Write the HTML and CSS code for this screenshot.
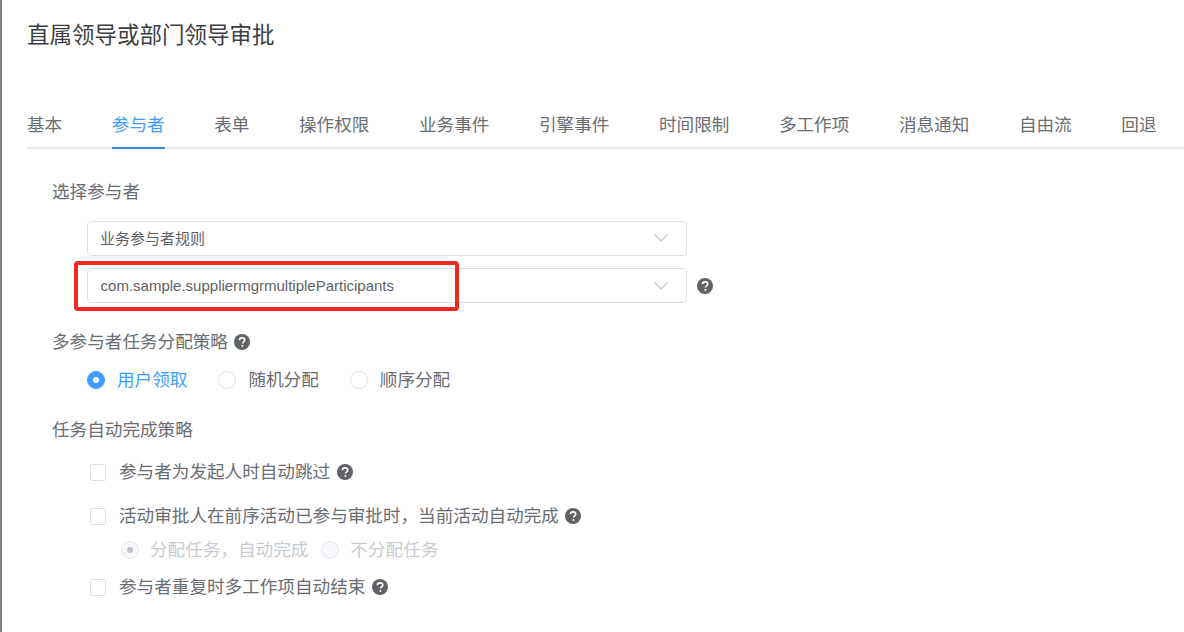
FILE: index.html
```html
<!DOCTYPE html>
<html lang="zh">
<head>
<meta charset="utf-8">
<title>直属领导或部门领导审批</title>
<link rel="stylesheet" href="styles.css">
</head>
<body>
<svg width="0" height="0" class="defs"><defs>
<symbol id="help" viewBox="0 0 16 16"><circle cx="8" cy="8" r="8" fill="#606266"/><path d="M5.4 6.3c0-1.5 1.1-2.4 2.6-2.4s2.7.9 2.7 2.2c0 1-.6 1.5-1.3 2-.6.4-.9.7-.9 1.4" fill="none" stroke="#fff" stroke-width="1.6"/><circle cx="8.4" cy="11.9" r="1" fill="#fff"/></symbol>
<symbol id="chev" viewBox="0 0 14 8"><path d="M.7.7 7 7l6.3-6.3" fill="none" stroke="#c0c4cc" stroke-width="1.2"/></symbol>
</defs></svg>
<span class="edge-mark"></span>
<main class="dialog">
  <h1 class="title">直属领导或部门领导审批</h1>
  <nav class="tabs">
    <a class="tab">基本</a>
    <a class="tab active">参与者</a>
    <a class="tab">表单</a>
    <a class="tab">操作权限</a>
    <a class="tab">业务事件</a>
    <a class="tab">引擎事件</a>
    <a class="tab">时间限制</a>
    <a class="tab">多工作项</a>
    <a class="tab">消息通知</a>
    <a class="tab">自由流</a>
    <a class="tab">回退</a>
  </nav>
  <form class="form">
    <div class="label">选择参与者</div>
    <div class="selects">
      <div class="select-row">
        <div class="select"><span>业务参与者规则</span><svg class="chev"><use href="#chev"/></svg></div>
      </div>
      <div class="select-row">
        <div class="select select-class"><span>com.sample.suppliermgrmultipleParticipants</span><svg class="chev"><use href="#chev"/></svg></div>
        <svg class="help"><use href="#help"/></svg>
        <div class="highlight"></div>
      </div>
    </div>
    <div class="label label-strategy">多参与者任务分配策略<svg class="help"><use href="#help"/></svg></div>
    <div class="radios">
      <label class="radio checked"><i class="dot"></i>用户领取</label>
      <label class="radio"><i class="dot"></i>随机分配</label>
      <label class="radio"><i class="dot"></i>顺序分配</label>
    </div>
    <div class="label label-auto">任务自动完成策略</div>
    <div class="check check-first"><i class="box"></i>参与者为发起人时自动跳过<svg class="help"><use href="#help"/></svg></div>
    <div class="check check-second"><i class="box"></i>活动审批人在前序活动已参与审批时，当前活动自动完成<svg class="help"><use href="#help"/></svg></div>
    <div class="radios sub">
      <label class="radio disabled checked"><i class="dot"></i>分配任务，自动完成</label>
      <label class="radio disabled"><i class="dot"></i>不分配任务</label>
    </div>
    <div class="check check-third"><i class="box"></i>参与者重复时多工作项自动结束<svg class="help"><use href="#help"/></svg></div>
  </form>
</main>
</body>
</html>
```

FILE: styles.css
```css
* { box-sizing: border-box; }
html, body { margin: 0; height: 632px; overflow: hidden; background: #fff; }
body {
  font-family: "Liberation Sans", "Noto Sans CJK SC", sans-serif;
  color: #6a6d72;
  border-left: 2px solid #7f7f7f;
  position: relative;
}
.defs { position: absolute; }
.edge-mark { position: absolute; left: -2px; top: 228px; width: 2px; height: 10px; background: #3a3440; }
.dialog { padding: 22px 0 0 25px; }
.title { margin: 0; font-size: 22.5px; line-height: 28px; font-weight: 400; color: #3c3e42; }
.tabs { display: flex; gap: 49.6px; margin-top: 45px; height: 54px; border-bottom: 2px solid #e4e7ed; }
.tab { font-size: 17.6px; line-height: 60px; height: 54px; color: #6a6d72; }
.tab.active { color: #409eff; border-bottom: 2px solid #3a8ad6; }
.form { padding: 30px 0 0 25px; }
.label { font-size: 17.6px; line-height: 26px; display: flex; align-items: center; }
.selects { display: flex; flex-direction: column; gap: 12px; margin: 16px 0 0 35px; }
.select-row { display: flex; align-items: center; position: relative; }
.select {
  width: 600px; height: 35px; padding: 0 18px 2px 12px;
  border: 1px solid #dcdfe6; border-radius: 4px;
  display: flex; align-items: center; justify-content: space-between;
  font-size: 15px; color: #606266;
}
.select-class { padding-bottom: 0; padding-left: 12.6px; }
.chev { width: 14px; height: 8px; }
.help { width: 16px; height: 16px; flex: none; margin-left: 10px; }
.highlight {
  position: absolute; left: -13px; top: -7px; width: 385px; height: 50px;
  border: 4px solid #ee2a20; border-radius: 4px;
}
.label-strategy { margin-top: 26px; }
.label-strategy .help { margin-left: 6px; }
.radios { display: flex; margin: 12px 0 0 35px; }
.radio { display: flex; align-items: center; font-size: 17.6px; line-height: 26px; margin-right: 31px; }
.dot { width: 18px; height: 18px; border-radius: 50%; border: 1px solid #dcdfe6; margin-right: 12px; background: #fff; position: relative; }
.radio.checked { color: #409eff; }
.radio.checked .dot { background: #409eff; border-color: #409eff; }
.radio.checked .dot::after { content: ""; position: absolute; left: 5px; top: 5px; width: 6px; height: 6px; border-radius: 50%; background: #fff; }
.radio.disabled { color: #c8cbd1; margin-right: 13px; }
.radio.disabled .dot { background: #f5f7fa; border-color: #e4e7ed; margin-right: 11px; }
.radio.disabled.checked .dot::after { background: #c0c4cc; }
.label-auto { margin-top: 24px; }
.check { display: flex; align-items: center; font-size: 17.6px; line-height: 26px; margin-left: 38px; }
.check .help { margin-left: 6.5px; }
.box { width: 16px; height: 17px; border: 1px solid #dcdfe6; border-radius: 2px; margin-right: 13px; }
.check-first { margin-top: 16px; }
.check-second { margin-top: 18px; }
.sub { margin: 8px 0 0 69px; }
.check-third { margin-top: 11px; }
```
